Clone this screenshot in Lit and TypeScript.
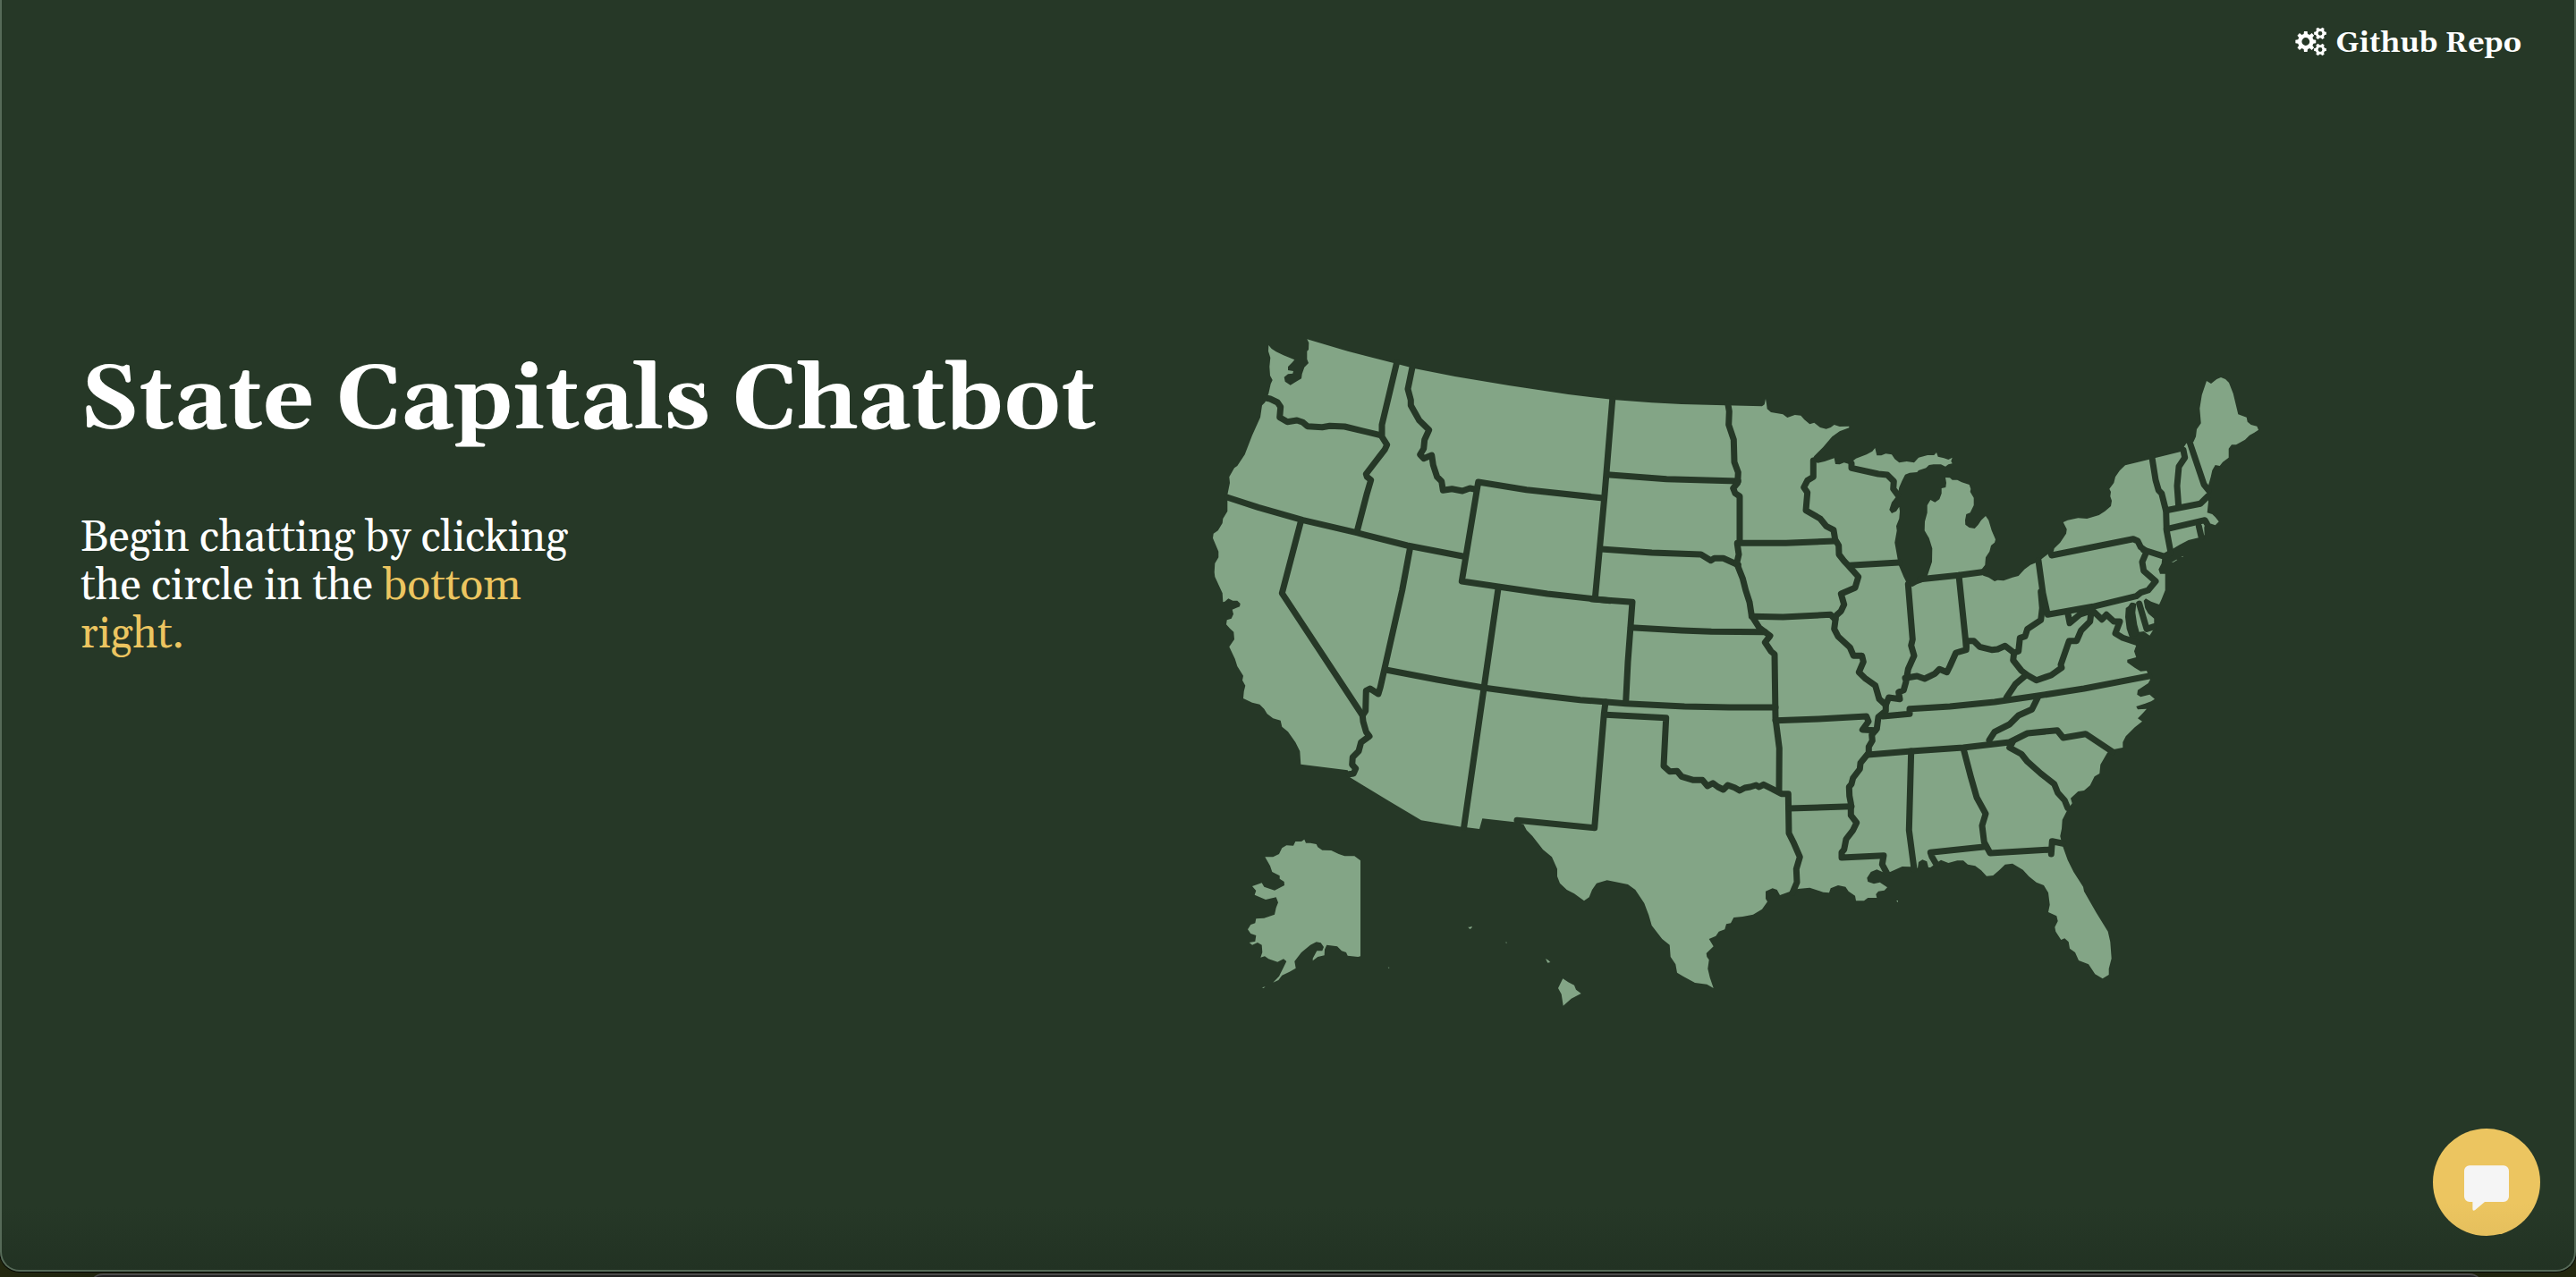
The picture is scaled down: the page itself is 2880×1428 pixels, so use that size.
import { LitElement, html, svg, css } from "lit";
import { customElement } from "lit/decorators.js";

/** Map sheets: each has an origin on the map and is drawn in thirds of a pixel. */
const SHEETS: Record<string, [number, number]> = {
  A: [1340, 360], B: [1340, 640], C: [1780, 420], D: [1700, 720],
  E: [2130, 440], F: [2080, 600], G: [1960, 820], H: [1370, 910],
};

/** Joins "A 1,2 3,4 B 5,6" into one path; a sheet letter sets the origin for the points after it. */
const trace = (src: string, close = false): string => {
  let [ox, oy] = [0, 0];
  const pts: string[] = [];
  for (const t of src.trim().split(/\s+/)) {
    if (SHEETS[t]) [ox, oy] = SHEETS[t];
    else {
      const [x, y] = t.split(",").map(Number);
      pts.push(`${(ox + x / 3).toFixed(1)} ${(oy + y / 3).toFixed(1)}`);
    }
  }
  return "M" + pts.join("L") + (close ? "Z" : "");
};

const MAINLAND = `
A 235,78 245,90 260,100 285,112 322,127 315,135 300,150 300,162 318,165 316,173 300,175 287,185 290,200 308,212 325,202 345,190 347,175 355,152 369,138 364,125 364,98 369,93 370,70 364,58 500,98 655,138 727,157 860,183 1040,213 1240,243
C 0,73 80,82 200,91 300,96 446,100 570,103 578,97 582,78 585,95 587,112 600,123 640,130 655,141 680,132 700,134 712,148 730,163 745,158 765,174 785,179 800,174 812,165 830,171 862,170 862,175 830,187 805,205 775,240 745,270 737,285 757,293 780,288 812,277 816,297 830,298 845,292 865,298 870,290 885,278 920,265 940,254 949,243 955,268 970,268 985,262 1005,265 1015,280 1030,292 1055,288 1080,292
E 45,215 75,207 97,207 105,198 110,212 130,217 145,222 158,215 154,227 158,235 145,238 135,245 120,238 95,238 80,240 70,250 45,258 40,264 15,266 0,272
C 1040,352 1030,375 1025,400 1005,425 997,450 1005,462 1020,455 1030,440 1032,455 1030,480 1020,505 1022,520 1015,560 1022,600 1028,635 1045,675 1060,705 1075,708 1090,700 1110,692
E 75,610 90,565 91,520 80,485 65,460 66,430 74,400 74,375 85,357 100,365 115,355 122,335 122,318 136,315 138,300 135,282 150,283 158,290 175,290 190,298 215,306 220,320 218,330 230,350 230,375 218,400 205,405 201,425 202,440 215,450 233,453 245,440 255,425 270,411 280,425 290,460 303,490 300,500 288,510 283,530 270,550 268,575 255,592 262,611 280,617 300,630 310,626 330,628 360,617 380,612 400,590 420,575 440,567 458,555 480,538 498,528 500,520 520,500 540,470 542,455 530,432 545,425 580,418 610,420 650,408 670,395 690,378 693,360 688,345 690,330 685,320 700,300 705,280 720,258 738,241 800,226 925,195 943,167 967,163 975,145 978,120 992,100 988,50 995,5 1011,-42 1026,-33 1045,-48 1059,-54 1074,-48 1086,-36 1100,0 1117,70 1145,80 1148,95 1160,105 1180,110 1185,122 1170,132 1155,140 1140,155 1110,172 1095,172 1085,185 1085,215 1065,230 1055,243 1040,240 1030,258 1025,280 1018,305 1013,335 1017,362 1013,400 1030,405 1040,415 1052,430 1040,442 1020,435 1008,430 1003,450 1004,475 990,482 950,492 920,508 900,520 885,530 862,555 860,570 850,590 855,605 872,605 872,660 860,690 852,708
F 975,218 957,208 950,215 955,240 965,258 985,275 985,308 970,332 950,318 935,320 928,295 922,255 925,225 915,222 890,240 888,270 893,310 905,345 925,365 918,385 925,405 895,413 895,422 920,440 940,452 960,450 972,480 965,492 930,515 928,530 940,538 970,530 987,545 975,553 955,560 925,570 930,580 960,578 945,595 930,610 945,620 920,640 890,670 880,690 880,708 845,715 828,725
G 1165,105 1162,135 1145,145 1130,175 1110,192 1090,195 1065,218 1070,235 1055,255 1037,290 1035,320 1030,345 1037,375 1055,425 1075,465 1107,515 1110,530 1150,600 1190,665 1198,700 1202,755 1193,790 1193,810 1172,823 1147,808 1125,775 1092,762 1080,735 1062,722 1058,700 1045,688 1033,693 1015,665 1012,650 1022,630 1018,613 990,600 995,575 990,535 975,510 950,500 925,480 905,458 870,437 845,440 825,460 805,477 783,479 765,460 745,445 720,440 705,427 685,427 655,435 630,425 615,435 595,450 588,450 583,430 568,424 555,432 552,452 530,448 500,447 460,465 440,468 415,457 395,465 382,485 385,498 405,505 425,500 450,517 440,527 420,530 412,540 415,552 385,552 372,562 345,562 342,545 320,530 310,515 285,510 260,520 255,535 235,533 190,518 150,522 125,530 90,543 80,525 65,520 42,530 42,555 48,565 30,590 0,608
D 745,915 715,918 705,937 690,940 685,958 665,965 655,980 632,990 647,1015 623,1038 625,1050 632,1060 628,1090 635,1120 647,1155 625,1142 585,1137 545,1115 525,1103 520,1075 503,1050 500,1010 475,990 440,945 430,910 415,870 385,825 360,807 290,793 255,803 240,825 230,850 213,862 180,838 155,825 132,803 123,780 123,755 105,715 75,690 40,645 20,625 10,605
B 1060,838 952,826 942,861 900,856 882,854 747,832 640,768 508,688 500,664 343,644 340,600 325,570 300,535 280,518 275,497 250,490 230,475 220,458 205,443 180,437 150,423 152,400 157,380 147,362 150,347 130,315 122,290 103,250 120,225 118,200 105,188 93,175 95,160 110,155 117,140 113,125 125,120 138,115 140,105 130,95 115,95 100,88 88,98 82,100 80,70 55,15
A 53,840 55,810 67,790 67,770 48,725 50,710 65,700 80,675 82,660 97,635 97,580 105,540 103,520 120,490 130,483 155,445 180,380 207,320 213,280 223,270 235,240 242,208 248,195 240,180 238,150 241,120 234,98`;

const ISLANDS = [
  "H 133,145 160,145 180,135 190,115 205,106 228,107 235,93 255,93 265,86 270,98 285,98 305,102 310,112 325,122 355,123 380,135 400,142 433,142 453,157 453,478 445,480 410,476 405,465 390,460 375,445 340,440 333,455 332,475 310,480 293,493 293,485 307,460 325,460 330,447 320,433 305,430 285,440 255,465 232,495 236,518 215,530 190,542 178,558 160,566 180,545 195,515 205,495 195,487 175,497 145,487 132,478 118,482 124,465 122,440 108,432 90,440 80,432 100,428 103,408 85,402 75,388 85,372 100,367 103,352 130,350 165,338 170,315 177,298 170,280 135,288 98,272 103,258 90,243 122,232 130,245 165,257 198,240 197,228 182,218 182,208 157,195 150,175",
  "H 1132,553 1150,565 1170,575 1176,590 1193,603 1160,620 1133,644 1127,605 1116,585",
  "H 1074,486 1083,491 1090,498 1081,500",
  "H 814,380 820,380 827,377 826,383 820,387",
  "H 938,431 945,431 943,434",
  "H 545,515 550,515 549,519",
  "H 123,583 134,580 128,585",
  "E 893,567 910,557 913,558 900,566",
  "E 926,548 934,545 930,549",
  "G 480,562 486,561 486,567",
];

const BORDERS = [
  "A 225,255 240,258 265,270 275,285 272,320 298,335 330,330 350,337 365,350 415,353 440,349 490,351 610,380",
  "A 665,135 615,345 615,385 632,412 625,428 600,460 562,510 565,520 578,530 565,575 531,705",
  "A 718,148 702,225 712,262 712,280 740,330 773,362 758,395 755,425 743,445 755,458 782,447 787,480 800,520 815,535 820,565 850,560 885,567 910,558 930,562",
  "A 95,588 200,622 350,665 530,707 700,750 890,787",
  "A 343,670 280,910 B 550,480",
  "A 1350,590 1100,563 938,537 883,870 B 1005,48 1170,72 1380,95",
  "C 68,80 42,400 10,748",
  "C 50,332 250,347 490,354",
  "C 30,582 200,594 365,600 398,620 410,613 440,613 490,635",
  "C 0,750 135,760 120,960 D 353,195",
  "C 130,845 300,855 400,859 580,860",
  "C 456,98 460,120 458,165 475,215 477,290 490,325 488,360 473,378 480,395 495,405 495,560 487,565 492,600 485,630 505,680 515,720 528,760 535,805 560,845 597,873 580,895 600,925 612,935 D 855,250 868,350 867,490",
  "B 632,328 800,360 960,388 1150,413 D 200,188 353,200 550,210 700,213 855,213",
  "A 710,755 683,900 B 610,385 603,408 575,390 562,397 560,465 550,480 552,500 562,535 573,550 545,570 537,600 517,620 515,645 527,658 520,675 505,677",
  "B 1005,55 890,855",
  "B 1365,435 1360,475 1328,857 1068,832",
  "D 285,238 488,248 480,410 500,428 525,427 540,445 580,457 610,457 627,477 645,467 662,480 680,489 695,474 718,482 735,492 752,483 770,480 790,474 800,480 815,472 845,487 875,503 898,503 900,635 915,665 937,715 925,755 927,800 912,835",
  "D 900,552 1110,545",
  "D 855,257 1000,252 1160,243 1167,260 1147,288 1190,290",
  "C 487,562 650,562 815,555",
  "C 535,808 640,810 800,802 815,818",
  "C 742,285 742,340 722,352 710,375 722,392 717,452 765,480 785,505 810,518 815,550 827,570 828,600 845,622 862,640 893,675 882,712 835,732 845,768 835,790 818,805 812,850 825,875 865,912 877,940 905,940 D 1150,60 1135,95 1155,115 1190,140 1203,185 1225,205 1225,225 1200,245 1195,285 1178,305 1180,325 1168,345 1168,365 1140,400 1138,420 1115,450 1110,470 1102,480 1103,510 1108,535 1108,575 1127,600 1115,625 1092,655 1085,690 1077,700 1077,717 1218,710 1213,740 1228,768",
  "C 862,637 1030,627",
  "C 1060,700 1075,885 1070,905 1080,940 D 1300,85 1292,130 1285,155 1268,162 1272,185 1235,180 1225,205",
  "F 150,475 190,468 215,477 250,460 265,445 290,455 300,435 320,390 355,380 355,350 380,350 400,370 440,380 460,378 485,367 515,390 530,385 535,340 552,335 560,310 605,280 610,240 605,185",
  "F 597,80 612,190 628,262 780,235 925,200 940,188 965,180 990,150 950,115 945,85 960,50 940,35 930,15 915,8 641,63 638,54",
  "F 330,130 355,370",
  "F 200,143 330,130 420,118",
  "F 515,390 512,415 540,450 560,465 590,482 640,465 675,440 672,430 700,350 725,350 740,315 770,285 775,245",
  "F 555,465 520,495 490,540",
  "F 695,255 702,290 735,262 765,252",
  "F 770,240 810,278 825,262 850,285 870,285 855,325 880,340 925,355",
  "F 75,603 165,595 165,578 300,570 450,555 590,535 750,510 968,468",
  "F 595,540 575,580 530,600 500,630 450,655 432,683",
  "F 25,732 170,720 345,708 500,690 560,660 660,650 680,675 755,662 845,722",
  "F 510,690 500,708 540,730 560,755 G 965,135 1010,170 1022,200 1045,225 1055,250",
  "G 530,60 523,325 540,455",
  "G 705,50 730,145 750,215 780,270 768,310 775,365 795,402 1000,390 1000,405 1003,362 1040,370",
  "G 780,380 595,400 600,415 615,440",
  "C 870,295 870,310 960,330 990,333 1012,355 1010,380 1025,400",
  "E 828,215 840,290 850,325 860,335 875,395 877,460 890,530",
  "E 933,190 938,215 918,245 912,310 917,380",
  "E 955,165 1002,305 1018,325",
  "E 875,392 990,370 1015,345",
  "E 877,455 1005,425 1012,436",
  "E 985,445 993,480",
  "E 800,525 870,547 890,535",
  "F 935,225 960,310 985,302",
  "F 912,232 903,250 905,300 920,325",
];

/** A toothed wheel with a round hole. */
const gear = (cx: number, cy: number, r: number, teeth: number, hole: number) => {
  const pts: string[] = [];
  const step = (Math.PI * 2) / teeth;
  for (let i = 0; i < teeth; i++) {
    for (const [k, rad] of [[-0.32, r * 0.76], [-0.2, r], [0.2, r], [0.32, r * 0.76]]) {
      const a = (i + k) * step;
      pts.push(`${(cx + Math.cos(a) * rad).toFixed(2)} ${(cy + Math.sin(a) * rad).toFixed(2)}`);
    }
  }
  const h = `M${cx - hole} ${cy}a${hole} ${hole} 0 1 0 ${hole * 2} 0a${hole} ${hole} 0 1 0 ${-hole * 2} 0Z`;
  return svg`<path fill-rule="evenodd" d=${"M" + pts.join("L") + "Z" + h}></path>`;
};

@customElement("us-map")
export class UsMap extends LitElement {
  static styles = css`
    :host { display: block; }
    .map { display: block; width: 1200px; height: 780px; }
    .land { fill: #83a586; }
    .border { fill: none; stroke: #263827; stroke-width: 7; stroke-linejoin: round; stroke-linecap: round; }
  `;
  render() {
    return html`<svg class="map" viewBox="1340 360 1200 780" aria-hidden="true">
      <path class="land" d=${trace(MAINLAND, true)}></path>
      ${ISLANDS.map((i) => svg`<path class="land" d=${trace(i, true)}></path>`)}
      ${BORDERS.map((b) => svg`<path class="border" d=${trace(b)}></path>`)}
    </svg>`;
  }
}

@customElement("app-root")
export class AppRoot extends LitElement {
  static styles = css`
    :host {
      display: block; box-sizing: border-box; width: 2880px; height: 1428px; overflow: hidden; position: relative;
      background: linear-gradient(90deg, #23280f, #12140c 20%, #12140c 80%, #23280f);
      font-family: Georgia, Gelasio, "Liberation Serif", serif; color: #fff;
    }
    .behind { position: absolute; left: 100px; right: 104px; top: 1424px; height: 30px; border-radius: 20px;
      background: #232323; border-top: 2px solid #4b4b4b; box-sizing: border-box; }
    .window { position: relative; box-sizing: border-box; height: 1422px; border: 2px solid #566a58; border-top: 0;
      border-radius: 0 0 22px 22px; background: linear-gradient(#263827 0, #263827 1350px, #223223 1420px);
      box-shadow: 0 0 0 1px #050805; display: flex; flex-direction: column; overflow: hidden; }
    .nav { display: flex; justify-content: flex-end; align-items: center; height: 94px; padding-right: 59px; box-sizing: border-box; }
    .repo { display: flex; align-items: center; color: inherit; text-decoration: none; }
    .gears { width: 36px; height: 34px; fill: #fff; margin: 0 10px 2px 0; }
    .repo-label { font-size: 32px; font-weight: 700; line-height: 36px; white-space: nowrap; padding-top: 4px; }
    .hero { display: flex; align-items: flex-start; padding: 266px 0 0 88px; }
    .copy { width: 1250px; flex: none; padding-top: 33px; box-sizing: border-box; }
    .title { margin: 0; font-size: 100px; line-height: 114px; font-weight: 700; white-space: nowrap; }
    .lead { margin: 68px 0 0; width: 560px; font-size: 48px; line-height: 54px; }
    .accent { color: #ecc560; }
    .chat { position: absolute; left: 2718px; top: 1262px; width: 120px; height: 120px; border: 0; padding: 0;
      border-radius: 50%; background: linear-gradient(#ecc560 70%, #e5bf5d); display: block; }
    .bubble { display: block; width: 120px; height: 120px; fill: #f5f5f5; }
  `;
  render() {
    return html`
      <div class="behind"></div>
      <div class="window">
        <header class="nav">
          <a class="repo" href="#">
            <svg class="gears" viewBox="2566 29 36 34" aria-hidden="true">
              ${gear(2577.8, 46.5, 11.6, 8, 4.4)}${gear(2594, 37.3, 7, 6, 2.4)}${gear(2594, 55.5, 7, 6, 2.4)}
            </svg>
            <span class="repo-label">Github Repo</span>
          </a>
        </header>
        <main class="hero">
          <section class="copy">
            <h1 class="title">State Capitals Chatbot</h1>
            <p class="lead">Begin chatting by clicking<br />the circle in the <span class="accent">bottom<br />right.</span></p>
          </section>
          <us-map></us-map>
        </main>
        <button class="chat" aria-label="Open chat">
          <svg class="bubble" viewBox="0 0 120 120" aria-hidden="true">
            <path d="M41 41.3h38a6 6 0 0 1 6 6v28.700a6 6 0 0 1-6 6H58L47 91.200q-2.600 1.400-2.600-1.400V82H41a6 6 0 0 1-6-6V47.300a6 6 0 0 1 6-6Z"></path>
          </svg>
        </button>
      </div>
    `;
  }
}
